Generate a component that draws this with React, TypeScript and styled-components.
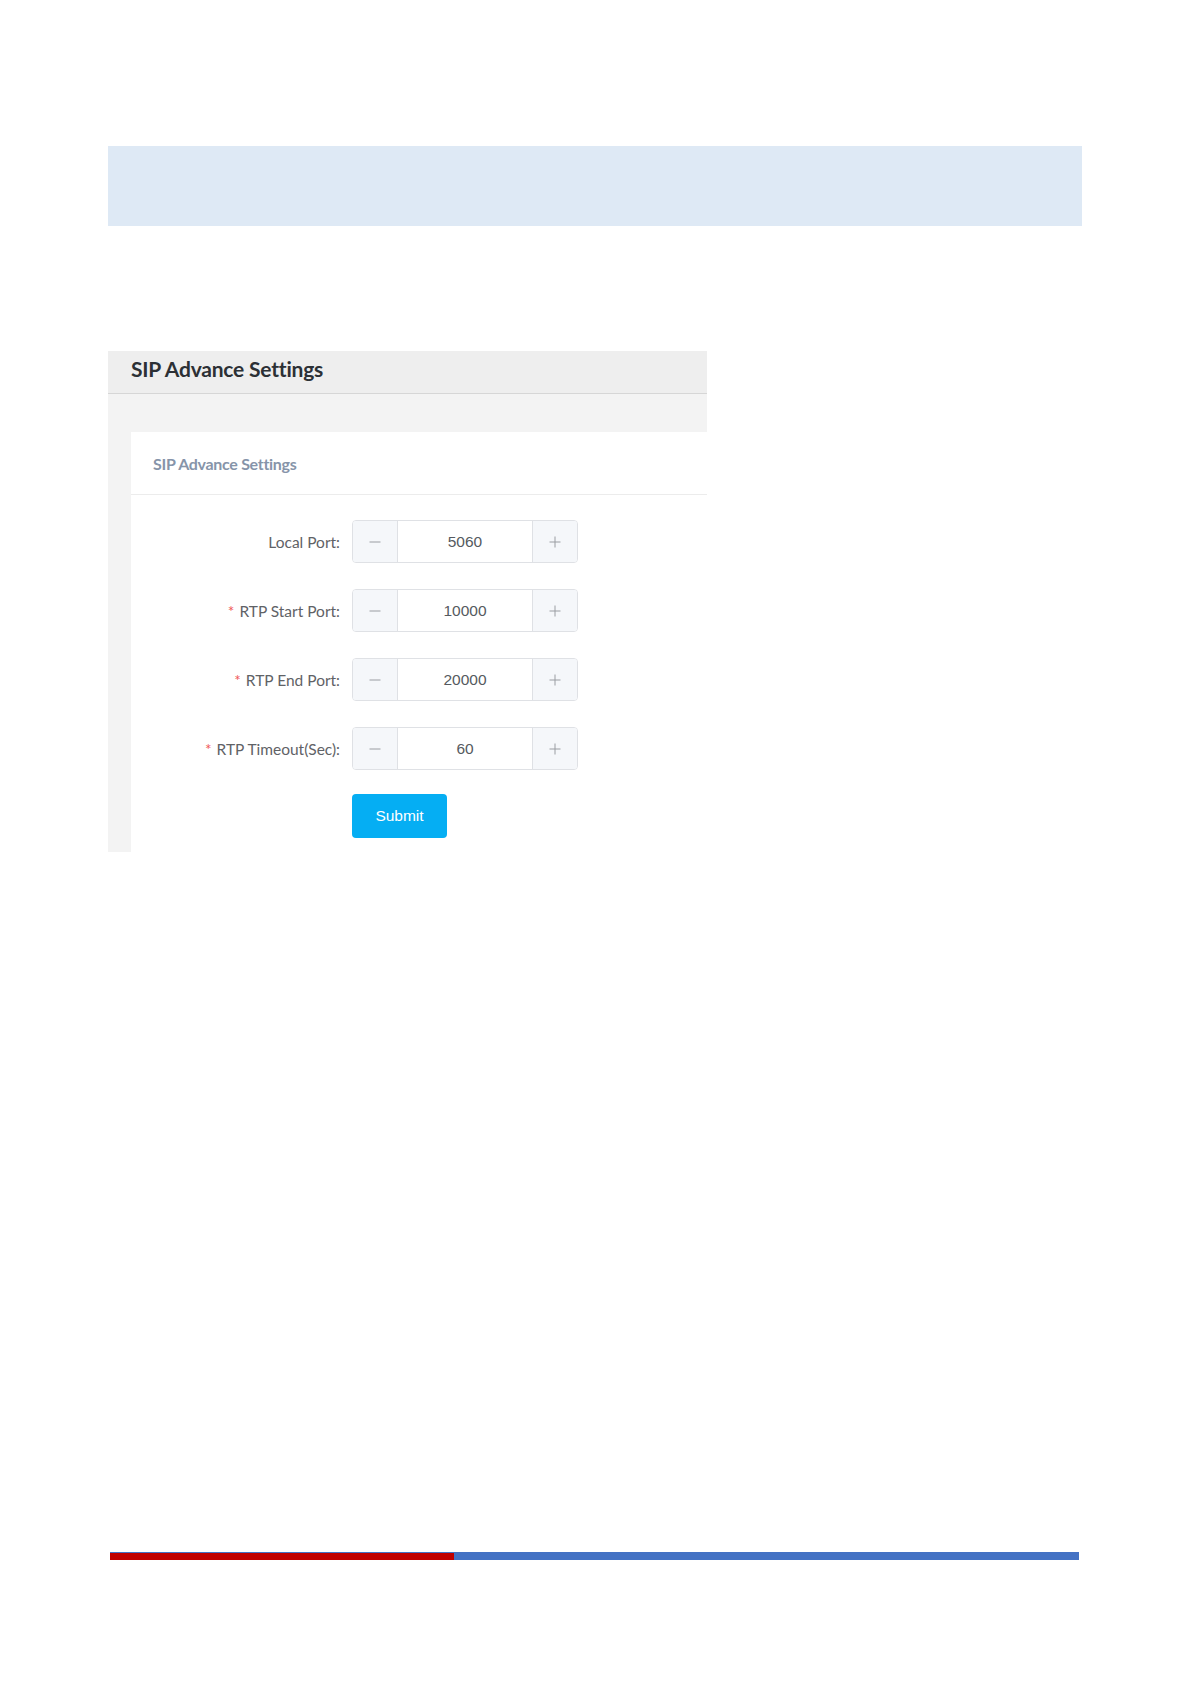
import React from "react";
import styled, { createGlobalStyle } from "styled-components";

const Global = createGlobalStyle`
  html, body { margin: 0; padding: 0; background: #ffffff; }
  #root { min-height: 1685px; }
`;

const Page = styled.div`
  width: 1191px;
  min-height: 1685px;
  display: flex;
  flex-direction: column;
  box-sizing: border-box;
  padding-top: 146px;
`;

const Band = styled.div`
  margin-left: 108px;
  width: 974px;
  height: 80px;
  background: #dee9f5;
`;

const Shot = styled.div`
  margin-top: 125px;
  margin-left: 108px;
  width: 599px;
  height: 501px;
  overflow: hidden;
  display: flex;
  flex-direction: column;
  background: #f3f3f3;
`;

const TopBar = styled.div`
  height: 43px;
  flex: none;
  box-sizing: border-box;
  padding: 0 0 8px 23px;
  display: flex;
  align-items: center;
  background: #eeeeee;
  border-bottom: 1px solid #d6d6d6;
  font-family: Lato, "Noto Sans", sans-serif;
  font-weight: 700;
  font-size: 21px;
  color: #2c3035;
  letter-spacing: -0.2px;
`;

const Body = styled.div`
  flex: 1;
  padding: 38px 0 0 23px;
  display: flex;
`;

const Card = styled.div`
  flex: 1;
  background: #ffffff;
  display: flex;
  flex-direction: column;
`;

const CardHead = styled.div`
  height: 62px;
  display: flex;
  align-items: center;
  padding-left: 22px;
  border-bottom: 1px solid #ececec;
  font-family: Lato, "Noto Sans", sans-serif;
  font-weight: 700;
  font-size: 16px;
  color: #8694a9;
  letter-spacing: -0.3px;
`;

const Form = styled.div`
  padding-top: 25px;
  display: flex;
  flex-direction: column;
  gap: 26px;
`;

const Row = styled.div`
  display: flex;
  align-items: center;
  height: 43px;
  gap: 12px;
`;

const Label = styled.div`
  width: 209px;
  text-align: right;
  font-family: Lato, "Noto Sans", sans-serif;
  font-size: 15.5px;
  color: #5f6266;
`;

const Star = styled.span`
  color: #f05a5a;
  margin-right: 5px;
`;

const Stepper = styled.div`
  width: 226px;
  height: 43px;
  box-sizing: border-box;
  border: 1px solid #dfe1e5;
  border-radius: 4px;
  display: flex;
  overflow: hidden;
`;

const StepBtn = styled.div<{ $side: "left" | "right" }>`
  width: 44px;
  flex: none;
  background: #f5f7fa;
  display: flex;
  align-items: center;
  justify-content: center;
  ${(p) =>
    p.$side === "left"
      ? "border-right: 1px solid #dfe1e5;"
      : "border-left: 1px solid #dfe1e5;"}
`;

const Value = styled.div`
  flex: 1;
  display: flex;
  align-items: center;
  justify-content: center;
  font-family: "Liberation Sans", Arial, sans-serif;
  font-size: 15.5px;
  color: #555a60;
`;

const Actions = styled.div`
  padding-left: 221px;
  margin-top: -2px;
`;

const Submit = styled.button`
  width: 95px;
  height: 44px;
  border: none;
  border-radius: 4px;
  background: #05aef3;
  color: #ffffff;
  font-family: "Liberation Sans", Arial, sans-serif;
  font-size: 15.5px;
  cursor: pointer;
`;

const Footer = styled.div`
  margin-top: auto;
  margin-bottom: 125px;
  margin-left: 110px;
  width: 969px;
  height: 8px;
  background: #4472c4;
  display: flex;
`;

const FooterRed = styled.div`
  margin-top: 1px;
  width: 344px;
  background: #c00000;
`;

const Minus = () => (
  <svg width="12" height="12" viewBox="0 0 12 12">
    <line x1="0.5" y1="6" x2="11.5" y2="6" stroke="#9a9da2" strokeWidth="1" />
  </svg>
);

const Plus = () => (
  <svg width="12" height="12" viewBox="0 0 12 12">
    <line x1="0.5" y1="6" x2="11.5" y2="6" stroke="#9a9da2" strokeWidth="1" />
    <line x1="6" y1="0.5" x2="6" y2="11.5" stroke="#9a9da2" strokeWidth="1" />
  </svg>
);

const rows = [
  { label: "Local Port:", value: "5060", required: false },
  { label: "RTP Start Port:", value: "10000", required: true },
  { label: "RTP End Port:", value: "20000", required: true },
  { label: "RTP Timeout(Sec):", value: "60", required: true },
];

export default function App() {
  return (
    <>
      <Global />
      <Page>
        <Band />
        <Shot>
          <TopBar>SIP Advance Settings</TopBar>
          <Body>
            <Card>
              <CardHead>SIP Advance Settings</CardHead>
              <Form>
                {rows.map((r) => (
                  <Row key={r.label}>
                    <Label>
                      {r.required && <Star>*</Star>}
                      {r.label}
                    </Label>
                    <Stepper>
                      <StepBtn $side="left">
                        <Minus />
                      </StepBtn>
                      <Value>{r.value}</Value>
                      <StepBtn $side="right">
                        <Plus />
                      </StepBtn>
                    </Stepper>
                  </Row>
                ))}
                <Actions>
                  <Submit>Submit</Submit>
                </Actions>
              </Form>
            </Card>
          </Body>
        </Shot>
        <Footer>
          <FooterRed />
        </Footer>
      </Page>
    </>
  );
}
